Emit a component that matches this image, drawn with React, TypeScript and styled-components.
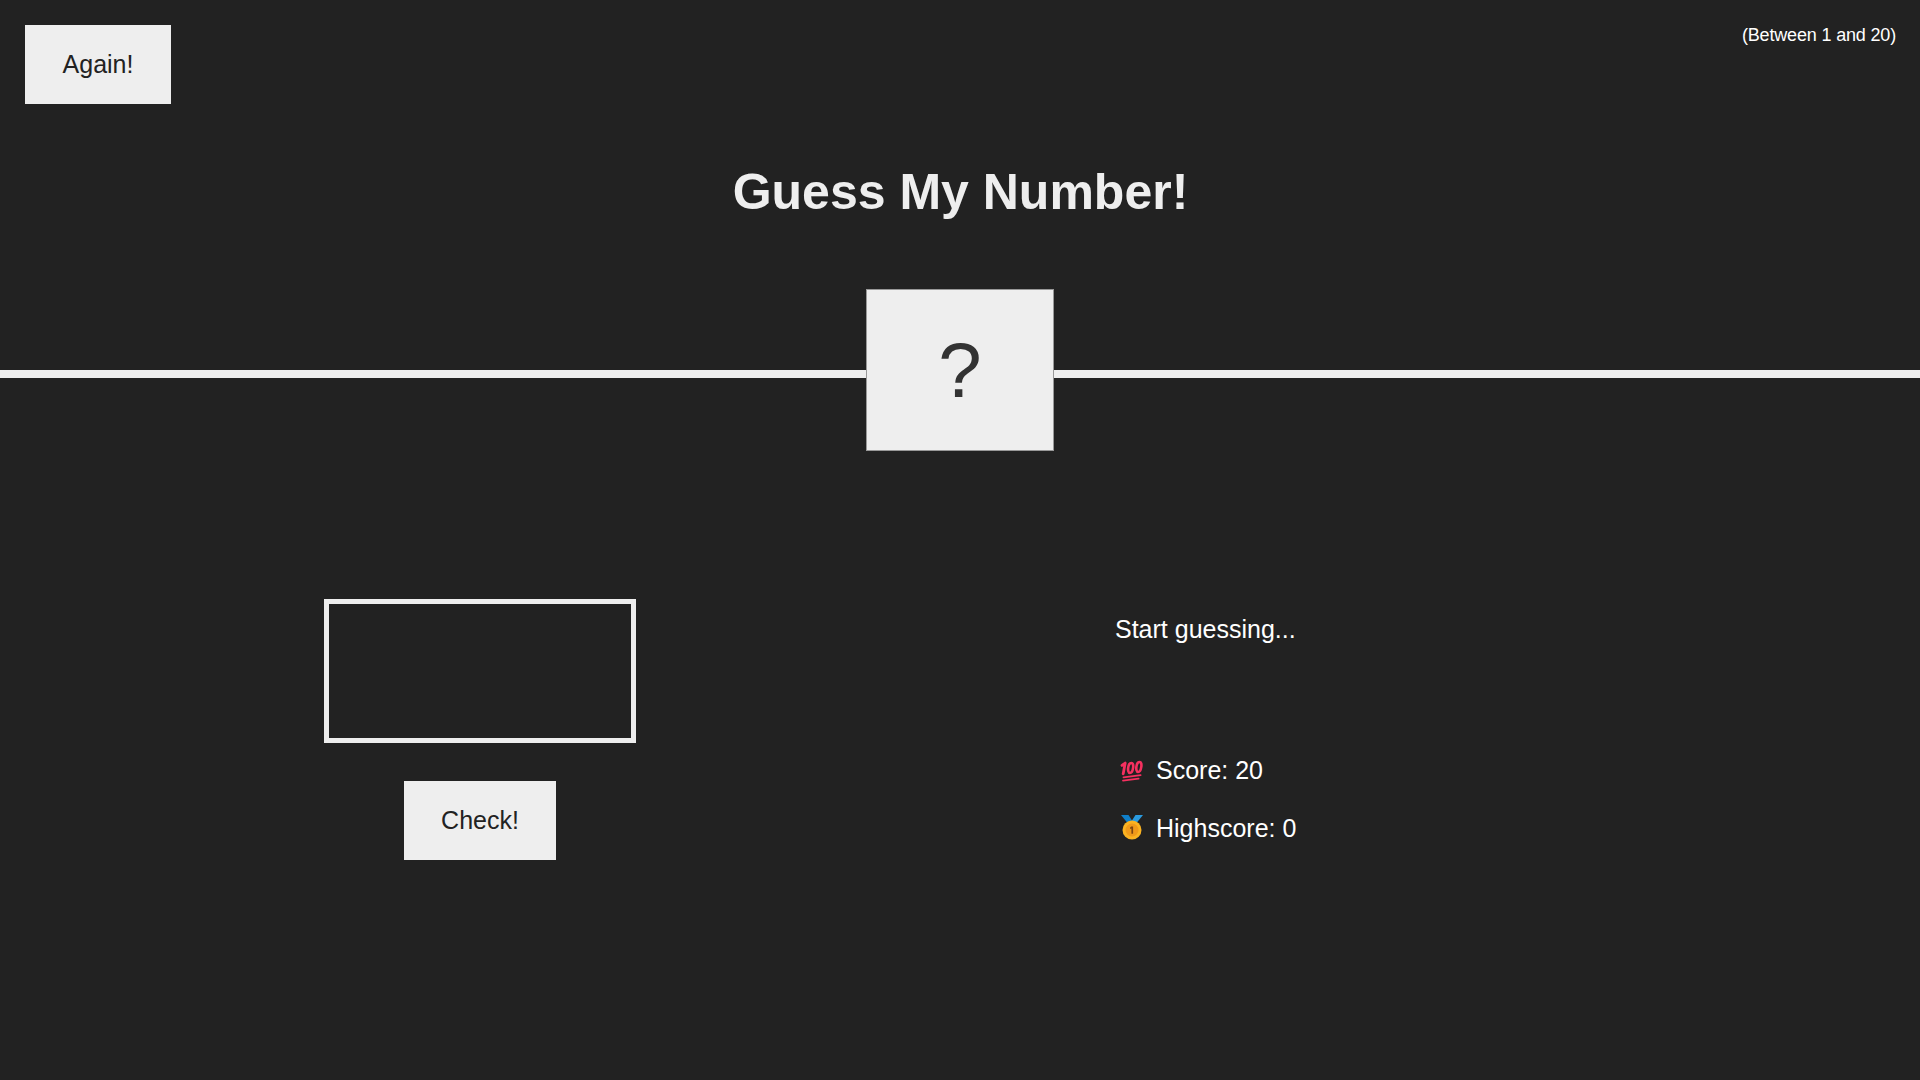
import styled, { createGlobalStyle } from "styled-components";

const GlobalStyle = createGlobalStyle`
  * {
    margin: 0;
    padding: 0;
    box-sizing: border-box;
  }

  body {
    font-family: "Liberation Sans", Arial, sans-serif;
    color: #eee;
    background-color: #222;
  }
`;

function HundredIcon() {
  return (
    <svg width="24" height="24" viewBox="0 0 24 24" overflow="visible">
      <g fill="none" stroke="#f5305f" strokeLinecap="round" strokeLinejoin="round">
        <path d="M2 7.4 5.2 5 3.2 15.800" strokeWidth="2.800" />
        <path d="M11.400 5c-1.700 0-2.800 2-3.200 4.600-.4 2.600.1 5.400 1.700 5.400s2.800-2.500 3.200-5.100c.4-2.600-.1-4.900-1.700-4.900Z" strokeWidth="2.600" />
        <path d="M19.600 4c-1.700 0-2.800 2-3.200 4.600-.4 2.600.1 5.400 1.700 5.400s2.800-2.500 3.200-5.100c.4-2.600-.1-4.900-1.700-4.900Z" strokeWidth="2.600" />
        <path d="M3.500 19.400 20.600 17.200" strokeWidth="1.800" />
        <path d="M3 22.600 18.600 20.700" strokeWidth="1.800" />
      </g>
    </svg>
  );
}

function MedalIcon() {
  return (
    <svg width="24" height="24" viewBox="0 0 24 24" overflow="visible">
      <path d="M1 -1h7.500l4.500 7-3.500 3.600Z" fill="#0f7fc9" />
      <path d="M23 -1h-7.500l-4.500 7 3.500 3.600Z" fill="#2a9be0" />
      <circle cx="12" cy="14" r="9.500" fill="#fbb321" />
      <circle cx="12" cy="14" r="6.500" fill="#f09a1a" />
      <path d="M11.100 10.500h2v7.200h-1.700v-5.300l-1.300.6v-1.400Z" fill="#7c4510" />
    </svg>
  );
}

export default function App() {
  return (
    <>
      <GlobalStyle />
      <Header>
        <TopRow>
          <Button>Again!</Button>
          <Between>(Between 1 and 20)</Between>
        </TopRow>
        <Title>Guess My Number!</Title>
        <NumberBox>?</NumberBox>
      </Header>
      <Main>
        <LeftColumn>
          <GuessInput type="number" />
          <CheckButton>Check!</CheckButton>
        </LeftColumn>
        <RightColumn>
          <Message>Start guessing...</Message>
          <Stat $gap={0}>
            <HundredIcon /> Score: 20
          </Stat>
          <Stat $gap={32}>
            <MedalIcon /> Highscore: 0
          </Stat>
        </RightColumn>
      </Main>
    </>
  );
}

const Header = styled.header`
  position: relative;
  height: 378px;
  border-bottom: 8px solid #eee;
  padding: 25px 24px 0 25px;
`;

const TopRow = styled.div`
  display: flex;
  justify-content: space-between;
  align-items: flex-start;
`;

const Between = styled.p`
  font-size: 18px;
  line-height: 20px;
  color: #fff;
  letter-spacing: -0.17px;
`;

const Title = styled.h1`
  margin-top: 59px;
  font-size: 50px;
  line-height: 58px;
  font-weight: 700;
  text-align: center;
  color: #eee;
`;

const NumberBox = styled.div`
  position: absolute;
  left: 50%;
  top: 289px;
  transform: translateX(-50%);
  display: flex;
  align-items: center;
  justify-content: center;
  width: 188px;
  height: 162px;
  background: #eee;
  border: 1px solid #999;
  color: #333;
  font-size: 78px;
`;

const Button = styled.button`
  width: 146px;
  height: 79px;
  border: none;
  background: #eee;
  color: #222;
  font-family: inherit;
  font-size: 25px;
  cursor: pointer;
`;

const CheckButton = styled(Button)`
  width: 152px;
  margin-top: 38px;
`;

const Main = styled.main`
  display: grid;
  grid-template-columns: 1fr 1fr;
`;

const LeftColumn = styled.section`
  display: flex;
  flex-direction: column;
  align-items: center;
  padding-top: 221px;
`;

const GuessInput = styled.input`
  width: 312px;
  height: 144px;
  border: 5px solid #eee;
  background: none;
  color: inherit;
  outline: none;
`;

const RightColumn = styled.section`
  padding: 237px 0 0 155px;
  color: #fff;
`;

const Message = styled.p`
  font-size: 25px;
  line-height: 29px;
  margin-bottom: 113px;
`;

const Stat = styled.p<{ $gap: number }>`
  display: flex;
  align-items: center;
  gap: 12px;
  margin-top: ${(props) => props.$gap}px;
  padding-left: 5px;
  font-size: 25px;
  line-height: 26px;
`;
